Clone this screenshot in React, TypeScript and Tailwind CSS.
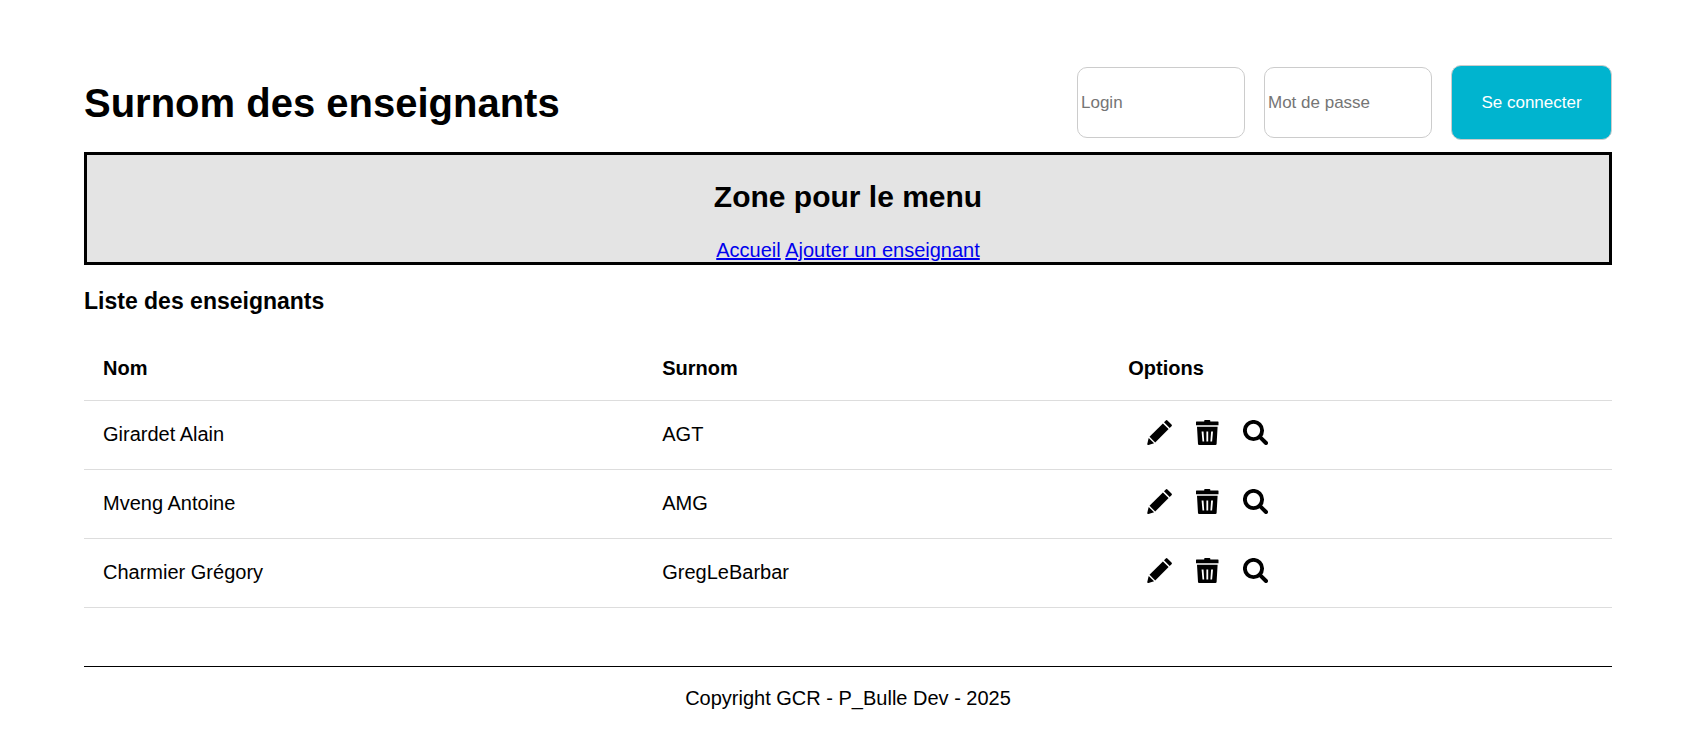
import React from "react";

const teachers = [
  { name: "Girardet Alain", nickname: "AGT" },
  { name: "Mveng Antoine", nickname: "AMG" },
  { name: "Charmier Grégory", nickname: "GregLeBarbar" },
];

function PencilIcon() {
  return (
    <svg viewBox="0 0 25 25" className="size-[25px]" aria-hidden="true">
      <path d="M15.9 3.400l5.700 5.700L8.200 22.500l-5.700-5.700z" />
      <path d="M17 2.300L18.800.5q.8-.8 1.600 0l4.100 4.100q.8.8 0 1.600L22.700 8z" />
      <path d="M1.700 17.900l5.400 5.400-5.600 1.600q-1.500.3-1.200-1.200z" />
    </svg>
  );
}

function TrashIcon() {
  return (
    <svg viewBox="0 0 25 25" className="size-[25px]" aria-hidden="true">
      <path d="M1.500 1.500h7.700V.8q0-.8.8-.8h4.500q.8 0 .8.800v.7H23q.5 0 .5.500v3.200H1V2q0-.5.500-.500z" />
      <path
        fillRule="evenodd"
        d="M2 6.800h20.600l-1 17.200q-.1 1-1.100 1H4.100q-1 0-1.100-1zM6.600 11.500l.9 10h1.700l-.7-10zM11.400 11.500v10h1.800v-10zM16.100 11.500l-.7 10h1.700l.9-10z"
      />
    </svg>
  );
}

function SearchIcon() {
  return (
    <svg viewBox="0 0 25 25" className="size-[25px]" fill="none" stroke="black" aria-hidden="true">
      <circle cx="10.500" cy="10.500" r="8.600" strokeWidth="3.900" />
      <path d="M16.800 16.800l6.200 6.200" strokeWidth="4" strokeLinecap="round" />
    </svg>
  );
}

const fieldClass =
  "h-[71px] w-[168px] rounded-[10px] border border-[#cccccc] bg-white px-[3px] text-[17px] placeholder:text-[#757575]";

export default function App() {
  return (
    <div className="bg-white pt-[65px] pr-20 pb-6 pl-[84px] font-['Liberation_Sans',Arial,sans-serif] text-[20px] leading-[23px] text-black">
      <header>
        <div className="flex items-center justify-between">
          <h1 className="text-[40px] leading-[44px] font-bold">Surnom des enseignants</h1>
          <form className="flex items-center gap-[19px]" onSubmit={(e) => e.preventDefault()}>
            <input type="text" aria-label="Login" placeholder="Login" className={fieldClass} />
            <input type="password" aria-label="Mot de passe" placeholder="Mot de passe" className={fieldClass} />
            <button
              type="submit"
              className="h-[75px] w-[161px] rounded-[10px] border border-[#cccccc] bg-[#00b4cf] text-[17px] text-white"
            >
              Se connecter
            </button>
          </form>
        </div>
        <nav className="mt-3 border-3 border-black bg-[#e4e4e4] pt-6 text-center">
          <h2 className="mb-6 text-[30px] leading-9 font-bold">Zone pour le menu</h2>
          <a href="#accueil" className="text-[#0000ee] underline">Accueil</a>{" "}
          <a href="#ajouter" className="text-[#0000ee] underline">Ajouter un enseignant</a>
        </nav>
      </header>
      <main>
        <h3 className="mt-[23px] text-[23px] leading-[26px] font-bold">Liste des enseignants</h3>
        <table className="mt-6 w-full table-fixed border-collapse text-left">
          <colgroup>
            <col className="w-[36.6%]" />
            <col className="w-[30.5%]" />
            <col className="w-[32.9%]" />
          </colgroup>
          <thead>
            <tr className="h-[62px] border-b border-[#dddddd]">
              <th className="px-[19px]">Nom</th>
              <th className="px-[19px]">Surnom</th>
              <th className="px-[19px]">Options</th>
            </tr>
          </thead>
          <tbody>
            {teachers.map((t) => (
              <tr key={t.name} className="h-[69px] border-b border-[#dddddd]">
                <td className="px-[19px]">{t.name}</td>
                <td className="px-[19px]">{t.nickname}</td>
                <td className="px-[38px]">
                  <div className="flex items-center gap-[23px] pb-1">
                    <a href="#modifier" aria-label={`Modifier ${t.name}`}><PencilIcon /></a>
                    <a href="#supprimer" aria-label={`Supprimer ${t.name}`}><TrashIcon /></a>
                    <a href="#details" aria-label={`Détails de ${t.name}`}><SearchIcon /></a>
                  </div>
                </td>
              </tr>
            ))}
          </tbody>
        </table>
      </main>
      <footer className="mt-[58px] border-t border-black pt-5 text-center">
        <p>Copyright GCR - P_Bulle Dev - 2025</p>
      </footer>
    </div>
  );
}
